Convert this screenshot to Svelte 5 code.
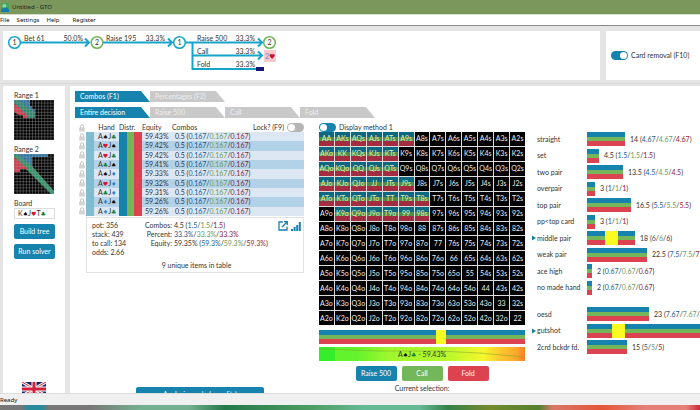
<!-- src/App.svelte -->
<script>
  let cardRemoval = true;
  let lockHands = false;
  let displayMethod = false;
  let board = 'K♠J♥T♣';

  const ranks = 'AKQJT98765432'.split('');

  // First and last coloured column in each row of the matrix
  const played = [[0, 5], [0, 4], [0, 4], [0, 5], [0, 6], [1, 6]];

  const cells = ranks.flatMap((row, r) =>
    ranks.map((col, c) => ({
      name: r === c ? row + col : c > r ? row + col + 's' : col + row + 'o',
      active: r < played.length && c >= played[r][0] && c <= played[r][1]
    }))
  );

  const combos = [
    { hand: 'A♠J♣', equity: '59.43%' },
    { hand: 'A♥J♠', equity: '59.42%' },
    { hand: 'A♥J♣', equity: '59.42%' },
    { hand: 'A♣J♠', equity: '59.41%' },
    { hand: 'A♠J♦', equity: '59.33%' },
    { hand: 'A♥J♦', equity: '59.32%' },
    { hand: 'A♣J♦', equity: '59.31%' },
    { hand: 'A♦J♠', equity: '59.26%' },
    { hand: 'A♦J♣', equity: '59.26%' }
  ];

  const suits = { '♠': 'spade', '♥': 'heart', '♣': 'club', '♦': 'diamond' };

  const stats = [
    { label: 'straight', total: 14, part: '4.67' },
    { label: 'set', total: 4.5, part: '1.5' },
    { label: 'two pair', total: 13.5, part: '4.5' },
    { label: 'overpair', total: 3, part: '1' },
    { label: 'top pair', total: 16.5, part: '5.5' },
    { label: 'pp<top card', total: 3, part: '1' },
    { label: 'middle pair', total: 18, part: '6', mark: 18 },
    { label: 'weak pair', total: 22.5, part: '7.5' },
    { label: 'ace high', total: 2, part: '0.67' },
    { label: 'no made hand', total: 2, part: '0.67' },
    { label: 'oesd', total: 23, part: '7.67', first: true },
    { label: 'gutshot', total: 48, mark: 25 },
    { label: '2crd bckdr fd.', total: 15, part: '5' }
  ];

  const barWidth = (total) => Math.round(total * 2.68);
</script>

{#snippet cards(text)}
  {#each text.split('') as char}
    {#if suits[char]}<span class="suit {suits[char]}">{char}</span>{:else}{char}{/if}
  {/each}
{/snippet}

{#snippet split(a)}
  (<span class="raise-text">{a}</span>/<span class="call-text">{a}</span>/<span class="fold-text">{a}</span>)
{/snippet}

{#snippet padlock()}
  <svg class="lock" width="6" height="8" viewBox="0 0 6 8" aria-hidden="true">
    <path d="M1.5 4V2.2a1.5 1.5 0 0 1 3 0V4" fill="none" stroke="#c4c4c4" />
    <rect x="0.3" y="3.6" width="5.4" height="3.8" fill="#c9c9c9" />
    <path d="M1 4.8h4M1 6.2h4" stroke="#ececec" stroke-width="0.5" />
  </svg>
{/snippet}

{#snippet gridLines()}
  {#each Array(14) as _, i}
    <path d="M{(i * 40) / 13} 0V40M0 {(i * 40) / 13}H40" stroke="#a0a0a0" stroke-width="0.4" />
  {/each}
{/snippet}

<div class="window">
  <header class="title-bar">
    <svg width="8" height="9" viewBox="0 0 8 9" aria-hidden="true">
      <rect width="8" height="9" rx="1" fill="#48a45c" />
      <circle cx="3.4" cy="3" r="2" fill="#8fdc9a" />
      <path d="M0 9V6.5L3 4.5h3L8 7v2z" fill="#147cae" />
    </svg>
    <span>Untitled - GTO</span>
  </header>

  <nav class="menu">
    <button>File</button>
    <button>Settings</button>
    <button>Help</button>
    <button class="register">Register</button>
  </nav>

  <div class="top">
    <section class="panel">
      <svg class="tree" width="290" height="46" viewBox="0 0 290 46">
        <g fill="none" stroke="#16a5c9" stroke-width="2">
          <path d="M17 11.5H86M100 11.5H169M182 11.5H259M189.5 11.5V38M188.5 24.5H259M188.5 38H253" />
          <path d="M82 7.5l4 4l-4 4M165 7.5l4 4l-4 4M255 7.5l4 4l-4 4M255 20.5l4 4l-4 4" />
          <circle cx="11.5" cy="11.5" r="5.8" stroke-width="1.5" />
          <circle cx="176.5" cy="11.5" r="5.8" stroke-width="1.5" />
        </g>
        <g fill="none" stroke="#70b556" stroke-width="1.5">
          <circle cx="94" cy="11.5" r="5.8" />
          <circle cx="266.5" cy="11.5" r="5.8" />
        </g>
        <rect x="253" y="36" width="8" height="4" fill="#171777" />
        <rect x="261" y="19" width="12" height="12" fill="#f9c9cd" />
        <g class="mid">
          <text x="11.5" y="14">1</text>
          <text x="94" y="14">2</text>
          <text x="176.5" y="14">1</text>
          <text x="266.5" y="14">2</text>
        </g>
        <text x="21" y="10">Bet 61</text>
        <text x="103" y="10">Raise 195</text>
        <text x="194" y="10">Raise 500</text>
        <text x="194" y="23">Call</text>
        <text x="194" y="36">Fold</text>
        <g class="end">
          <text x="80" y="10">50.0%</text>
          <text x="162" y="10">33.3%</text>
          <text x="252" y="10">33.3%</text>
          <text x="252" y="23">33.3%</text>
          <text x="252" y="36">33.3%</text>
        </g>
        <text class="card-two" x="262" y="28">2</text>
        <text class="card-heart" x="266" y="28">♥</text>
      </svg>
    </section>
    <section class="panel removal">
      <label><input type="checkbox" class="toggle" bind:checked={cardRemoval} />Card removal (F10)</label>
    </section>
  </div>

  <div class="body">
    <aside class="panel side">
      <div class="range">
        <span>Range 1</span>
        <svg width="40" height="40" viewBox="0 0 40 40" role="img" aria-label="Range 1">
          <rect width="40" height="40" fill="#000" />
          <path d="M1 0H16V6H18V9H21V13L14 12z" fill="#2b78a8" />
          <path d="M0 0L4 0L21 12V18H14L0 3z" fill="#2f8a70" />
          <path d="M0 3L14 16V18H9V15H5L0 12z" fill="#d5384a" />
          {@render gridLines()}
        </svg>
      </div>
      <div class="range">
        <span>Range 2</span>
        <svg width="40" height="40" viewBox="0 0 40 40" role="img" aria-label="Range 2">
          <rect width="40" height="40" fill="#000" />
          <path d="M1 0H34V3H18V13L12 12z" fill="#2b78a8" />
          <path d="M0 0L4 1L18 12L40 37V40H37L15 18L0 3z" fill="#2f9468" />
          <path d="M0 3L14 15H6V18H0z" fill="#d5384a" />
          {@render gridLines()}
        </svg>
      </div>
      <label class="board">
        Board
        <span class="board-field">
          <input aria-label="Board" bind:value={board} />
          <span class="board-cards" aria-hidden="true">{@render cards(board)}</span>
        </span>
      </label>
      <button class="action">Build tree</button>
      <button class="action">Run solver</button>
      <svg class="flag" width="24" height="11" viewBox="0 0 24 11" role="img" aria-label="English">
        <rect width="24" height="14" fill="#1d1f63" />
        <path d="M0 0L24 14M24 0L0 14" stroke="#fff" stroke-width="3" />
        <path d="M0 0L24 14M24 0L0 14" stroke="#d2203c" stroke-width="1" />
        <path d="M12 0V14M0 7H24" stroke="#fff" stroke-width="5" />
        <path d="M12 0V14M0 7H24" stroke="#d2203c" stroke-width="3" />
      </svg>
    </aside>

    <main class="panel main">
      <div class="tabs">
        <button class="tab active">Combos (F1)</button>
        <button class="tab">Percentages (F2)</button>
      </div>
      <div class="tabs">
        <button class="tab active">Entire decision</button>
        <button class="tab">Raise 500</button>
        <button class="tab">Call</button>
        <button class="tab">Fold</button>
      </div>

      <div class="columns">
        <section class="hands">
          <table>
            <thead>
              <tr>
                <th class="col-lock">{@render padlock()}</th>
                <th class="col-mark"></th>
                <th class="col-hand">Hand</th>
                <th class="col-distr">Distr.</th>
                <th class="col-equity">Equity</th>
                <th>
                  <div class="combo-head">
                    Combos
                    <label>Lock? (F9)<input type="checkbox" class="toggle off-grey" bind:checked={lockHands} /></label>
                  </div>
                </th>
              </tr>
            </thead>
            <tbody>
              {#each combos as combo}
                <tr>
                  <td class="lock-cell">{@render padlock()}</td>
                  <td class="mark-cell"></td>
                  <td class="hand-cell">{@render cards(combo.hand)}</td>
                  <td class="distr-cell"></td>
                  <td class="equity-cell">{combo.equity}</td>
                  <td class="combo-cell">0.5 {@render split('0.167')}</td>
                </tr>
              {/each}
            </tbody>
          </table>

          <div class="summary">
            <div class="pot">
              <span>pot: 356</span>
              <span>stack: 439</span>
              <span>to call: 134</span>
              <span>odds: 2.66</span>
            </div>
            <dl>
              <dt>Combos:</dt>
              <dd>4.5 {@render split('1.5')}</dd>
              <dt>Percent:</dt>
              <dd><span class="raise-text">33.3%</span>/<span class="call-text">33.3%</span>/<span class="fold-text">33.3%</span></dd>
              <dt>Equity:</dt>
              <dd>59.35% {@render split('59.3%')}</dd>
            </dl>
            <div class="icons">
              <button aria-label="Open in window">
                <svg width="10" height="10" viewBox="0 0 10 10">
                  <path d="M4.8 1H1V9H9V5.4" fill="none" stroke="#1583ad" stroke-width="1.3" />
                  <path d="M6 0.7H9.3V4M9 1L4 6" fill="none" stroke="#1583ad" stroke-width="1.3" />
                </svg>
              </button>
              <button aria-label="Chart">
                <svg width="10" height="10" viewBox="0 0 10 10">
                  <path d="M0 8H2V10H0zM2.6 6H4.6V10H2.6zM5.2 4H7.2V10H5.2zM7.8 1H9.8V10H7.8z" fill="#1583ad" />
                </svg>
              </button>
            </div>
            <p>9 unique items in table</p>
          </div>
          <button class="action analysis">Analysis mode (no edits)</button>
        </section>

        <section class="matrix-column">
          <label class="method"><input type="checkbox" class="toggle" bind:checked={displayMethod} />Display method 1</label>
          <div class="matrix">
            {#each cells as cell}
              <div class="cell" class:played={cell.active}>{cell.name}</div>
            {/each}
          </div>
          <div class="strategy"><i></i></div>
          <div class="equity-bar">
            <svg viewBox="0 0 206 14" preserveAspectRatio="none" aria-hidden="true">
              <path d="M0 2L60 4L120 4L160 6L206 10" fill="none" stroke="#7da32c" stroke-width="0.5" />
            </svg>
            <span>{@render cards('A♠J♣')} - 59.43%</span>
          </div>
          <div class="choices">
            <button class="action">Raise 500</button>
            <button class="action call">Call</button>
            <button class="action fold">Fold</button>
          </div>
          <p class="selection">Current selection:</p>
          <div class="selection-line"></div>
        </section>

        <section class="stats">
          {#each stats as stat}
            <div class="stat" class:first={stat.first}>
              <span class="pointer">{#if stat.mark}<svg width="4" height="6" viewBox="0 0 4 6"><path d="M0 0.5L4 3L0 5.5z" fill="#14809a" /></svg>{/if}</span>
              <span class="stat-label">{stat.label}</span>
              <div class="bar" style="width: {barWidth(stat.total)}px">
                {#if stat.mark}<i style="margin-left: {stat.mark}px"></i>{/if}
              </div>
              {#if stat.part}<span>{stat.total} {@render split(stat.part)}</span>{/if}
            </div>
          {/each}
        </section>
      </div>
    </main>
  </div>

  <footer class="status">Ready</footer>
  <div class="desktop"></div>
</div>

<style>
  :global(body) {
    margin: 0;
  }

  .window {
    display: flex;
    flex-direction: column;
    height: 100vh;
    overflow: hidden;
    background: #e5e5e5;
    color: #333;
    font: 7px/9px Lato, "DejaVu Sans", sans-serif;
    white-space: nowrap;
  }

  button {
    margin: 0;
    padding: 0;
    border: 0;
    background: none;
    color: inherit;
    font: inherit;
    cursor: pointer;
  }

  p {
    margin: 0;
  }

  .title-bar {
    display: flex;
    align-items: center;
    gap: 3px;
    flex: none;
    height: 14px;
    padding: 0 1px;
    background: #7b975c;
    color: #222;
    font-family: "Noto Sans", sans-serif;
    font-size: 6px;
  }

  .menu {
    display: flex;
    flex: none;
    gap: 7px;
    height: 10px;
    border-bottom: 1px solid #888;
    border-top: 1px solid #d5dec9;
    background: #fff;
    color: #111;
    font-family: "Noto Sans", sans-serif;
    font-size: 6px;
  }

  .menu .register {
    margin-left: 6px;
  }

  .panel {
    background: #fff;
  }

  .top {
    display: grid;
    grid-template-columns: 1fr 94px;
    gap: 6px;
    flex: none;
    padding: 5px 0 3px 3px;
    border-bottom: 1px solid #d8d8d8;
  }

  .tree {
    display: block;
    margin-bottom: 3px;
    fill: #333;
  }

  .mid {
    text-anchor: middle;
  }

  .end {
    text-anchor: end;
  }

  .card-two {
    fill: #7a7fb4;
  }

  .card-heart {
    fill: #c8102e;
    font-family: "DejaVu Sans", sans-serif;
  }

  .removal {
    display: flex;
    align-items: center;
    padding-left: 5px;
  }

  label {
    display: flex;
    align-items: center;
    gap: 3px;
  }

  .toggle {
    display: flex;
    appearance: none;
    box-sizing: border-box;
    width: 17px;
    height: 9px;
    margin: 0;
    padding: 1px;
    border-radius: 5px;
    background: #1583ad;
  }

  .toggle::before {
    content: "";
    width: 7px;
    height: 7px;
    border-radius: 50%;
    background: #fff;
  }

  .toggle:checked {
    justify-content: flex-end;
  }

  .toggle.off-grey:not(:checked) {
    background: #b5b5b5;
  }

  .body {
    display: grid;
    grid-template-columns: 62px 1fr;
    gap: 5px;
    flex: 1;
    min-height: 0;
    padding: 2px 0 0 3px;
    overflow: hidden;
  }

  .side {
    display: flex;
    flex-direction: column;
    align-items: flex-start;
    gap: 5px;
    min-height: 0;
    padding: 5px 11px 0;
    overflow: hidden;
  }

  .range {
    display: flex;
    flex-direction: column;
  }

  .board {
    flex-direction: column;
    align-items: flex-start;
    gap: 0;
  }

  .board-field {
    display: grid;
    width: 41px;
  }

  .board-field input {
    grid-area: 1 / 1;
    box-sizing: border-box;
    width: 100%;
    height: 11px;
    padding: 0 3px;
    border: 1px solid #ddd;
    color: transparent;
    font: inherit;
  }

  .board-cards {
    grid-area: 1 / 1;
    padding: 1px 4px;
    pointer-events: none;
  }

  .suit {
    font-family: "DejaVu Sans", sans-serif;
    font-size: 6px;
    line-height: 1;
  }

  .spade {
    color: #111;
  }

  .heart {
    color: #d4142f;
  }

  .club {
    color: #15803a;
  }

  .diamond {
    color: #1a86cc;
  }

  .action {
    width: 41px;
    height: 15px;
    border-radius: 2px;
    background: #1583ad;
    color: #fff;
  }

  .flag {
    flex: none;
    margin: auto 0 0 8px;
  }

  .main {
    min-width: 0;
    padding: 5px 0 0 5px;
    overflow: hidden;
  }

  .tabs {
    display: flex;
    margin-bottom: 5px;
  }

  .tab {
    width: 75px;
    height: 11px;
    padding-left: 5px;
    background: #c9c9c9;
    color: #eee;
    text-align: left;
    clip-path: polygon(0 0, calc(100% - 9px) 0, 100% 100%, 0 100%);
  }

  .tab.active {
    background: #1583ad;
    color: #fff;
  }

  .columns {
    display: grid;
    grid-template-columns: 225px 221px 1fr;
    padding-left: 4px;
  }

  .hands {
    display: flex;
    flex-direction: column;
    align-items: flex-end;
  }

  table {
    width: 100%;
    height: 93px;
    border-collapse: collapse;
    table-layout: fixed;
  }

  th,
  td {
    box-sizing: border-box;
    padding: 0;
    font-weight: normal;
    text-align: left;
    line-height: 9px;
  }

  .col-lock {
    width: 7px;
  }

  .col-mark {
    width: 8px;
  }

  .col-hand {
    width: 25px;
    text-align: center;
  }

  .col-distr {
    width: 23px;
  }

  .col-equity {
    width: 30px;
  }

  .lock {
    display: block;
  }

  .combo-head {
    display: flex;
    justify-content: space-between;
  }

  tbody tr {
    background: #dde7f4;
  }

  tbody tr:nth-child(even) {
    background: #b3d2e8;
  }

  .lock-cell {
    background: #fff;
  }

  .mark-cell {
    background: #7fbccf;
  }

  .hand-cell {
    padding-left: 4px;
  }

  .distr-cell {
    background: linear-gradient(90deg, #1583ad 33%, #74b65a 33% 66%, #dc4250 66%);
  }

  .equity-cell,
  .combo-cell {
    padding-left: 3px;
  }

  .raise-text {
    color: #17608f;
  }

  .call-text {
    color: #6a9a5e;
  }

  .fold-text {
    color: #8c2439;
  }

  .summary {
    display: grid;
    grid-template-columns: 47px 1fr auto;
    box-sizing: border-box;
    width: 218px;
    margin-top: 1px;
    padding: 3px 2px 2px 5px;
    border: 1px solid #e2e2e2;
  }

  .pot {
    display: flex;
    flex-direction: column;
  }

  dl {
    display: grid;
    grid-template-columns: 33px auto;
    grid-auto-rows: 9px;
    justify-content: start;
    column-gap: 2px;
    margin: 0;
  }

  dt {
    text-align: right;
  }

  dd {
    margin: 0;
  }

  .icons {
    display: flex;
    gap: 3px;
  }

  .icons button,
  .icons svg {
    display: block;
    height: 10px;
  }

  .summary p {
    grid-column: 1 / -1;
    margin-top: 4px;
    text-align: center;
  }

  .analysis {
    width: 128px;
    margin: 114px 40px 0 0;
  }

  .matrix-column {
    margin-left: 15px;
  }

  .matrix {
    display: grid;
    grid-template-columns: repeat(13, 1fr);
    grid-auto-rows: 1fr;
    gap: 1px;
    height: 193px;
    background: #ddd;
  }

  .cell {
    display: flex;
    align-items: center;
    justify-content: center;
    min-width: 0;
    min-height: 0;
    background: #000;
    color: #eee;
  }

  .cell.played {
    background: linear-gradient(#0b6880 33%, #4d8b48 33% 66%, #a42c40 66%);
    color: #e3efb5;
  }

  .strategy,
  .bar {
    display: flex;
    flex: none;
    height: 14px;
    background: linear-gradient(#1583ad 33%, #74b65a 33% 66%, #dc4250 66%);
  }

  .strategy {
    margin: 5px 0 3px;
  }

  .strategy i {
    width: 10px;
    margin-left: 117px;
    background: #fbfb24;
  }

  .bar i {
    width: 13px;
    background: #fbfb24;
  }

  .equity-bar {
    display: grid;
    place-items: center;
    height: 14px;
    background: linear-gradient(90deg, #35ee2b 0 8%, #62f32c 8% 18%, #9ef82c 34%, #b8f82b 62%, #f6f62c 80%, #fdc82e 88%, #fba62b 96%, #f58025);
  }

  .equity-bar svg {
    grid-area: 1 / 1;
    width: 100%;
    height: 14px;
  }

  .equity-bar > span {
    grid-area: 1 / 1;
  }

  .choices {
    display: flex;
    justify-content: center;
    gap: 5px;
    margin-top: 5px;
  }

  .action.call {
    background: #74b65a;
  }

  .action.fold {
    background: #dc4250;
  }

  .selection {
    margin-top: 3px;
    text-align: center;
  }

  .selection-line {
    width: 40px;
    margin: 1px auto;
    border-top: 1px solid #ccc;
  }

  .stats {
    display: flex;
    flex-direction: column;
    justify-content: space-between;
    height: 222px;
    margin: 9px 0 0 7px;
    min-width: 0;
    overflow: hidden;
  }

  .stat {
    display: flex;
    align-items: center;
  }

  .stat.first {
    margin-top: 10px;
  }

  .pointer {
    display: flex;
    flex: none;
    width: 5px;
  }

  .stat-label {
    flex: none;
    width: 50px;
  }

  .bar {
    margin-right: 5px;
  }

  .status {
    flex: none;
    height: 11px;
    border-top: 1px solid #ddd;
    background: #f0f0f0;
    color: #111;
    font-family: "Noto Sans", sans-serif;
    font-size: 6px;
    line-height: 12px;
  }

  .desktop {
    flex: none;
    height: 5px;
    background: linear-gradient(90deg, #777 0 3%, #288a9a 4% 6%, #777 7% 13%, #74b090 20% 27%, #23794a 32%, #4c9b60 44%, #65b995 52% 60%, #348148 64%, #748a2c 70%, #54812e 77%, #d97868 79%, #e55537 86%, #e48078 92% 98%, #cf2737);
  }
</style>
